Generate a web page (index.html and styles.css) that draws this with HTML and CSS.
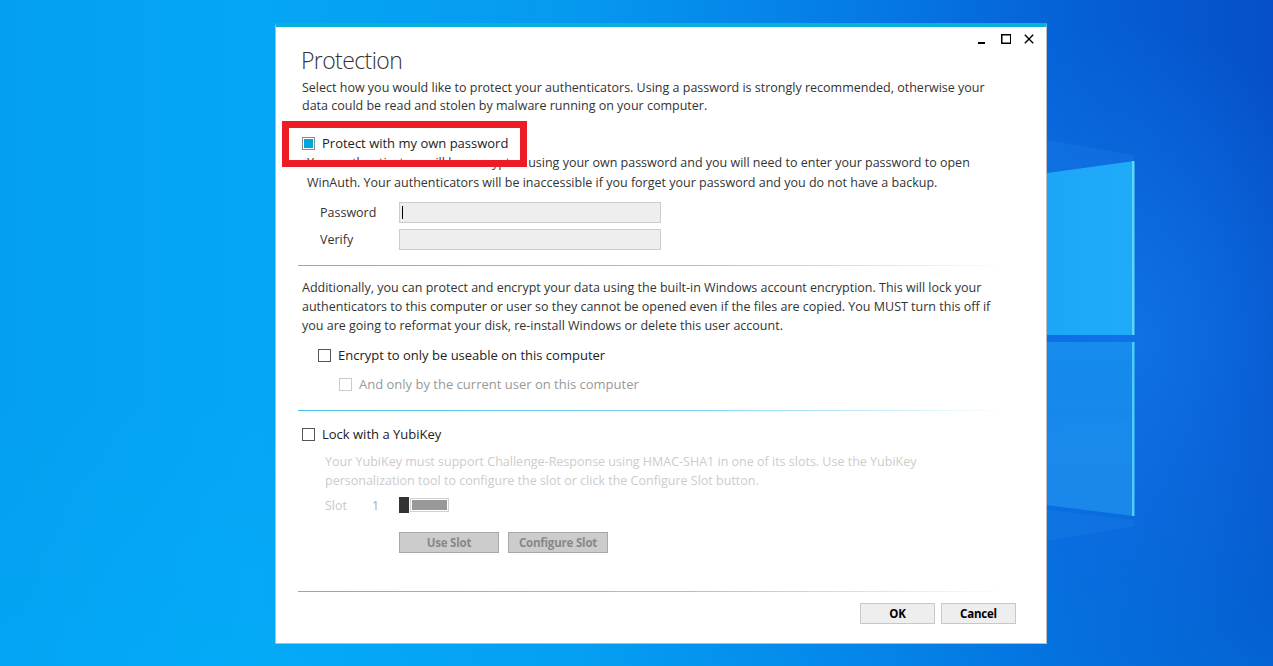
FILE: index.html
```html
<!DOCTYPE html>
<html lang="en">
<head>
<meta charset="utf-8">
<title>WinAuth - Protection</title>
<link rel="stylesheet" href="styles.css">
</head>
<body>
<div class="desktop">
  <svg class="wallpaper" width="1273" height="666" viewBox="0 0 1273 666" aria-hidden="true">
    <defs>
      <linearGradient id="paneTop" x1="0" y1="0" x2="1" y2="0">
        <stop offset="0" stop-color="#1798ef"/>
        <stop offset="1" stop-color="#20abf9"/>
      </linearGradient>
      <linearGradient id="paneBot" x1="0" y1="0" x2="0" y2="1">
        <stop offset="0" stop-color="#158cee"/>
        <stop offset="1" stop-color="#1983e9"/>
      </linearGradient>
    </defs>
    <polygon points="700,80 1134,155 1134,161 700,220" fill="#2a8ff0" opacity="0.18"/>
    <polygon points="700,470 1134,520 1134,526 700,600" fill="#2a8ff0" opacity="0.18"/>
    <polygon points="800,207 1134,161 1134,335 800,335" fill="url(#paneTop)"/>
    <polygon points="800,342 1134,342 1134,516 800,474" fill="url(#paneBot)"/>
    <polygon points="800,440 1134,420 1134,516 800,474" fill="#1b8cec" opacity="0.5"/>
    <rect x="1132" y="161" width="2.5" height="174" fill="#5cd8ff"/>
    <rect x="1132" y="342" width="2.5" height="174" fill="#50cdff"/>
  </svg>

  <div class="window">
    <div class="titlebar">
      <svg class="ctl" width="10" height="10" viewBox="0 0 10 10"><rect x="0" y="8" width="7" height="2" fill="#000"/></svg>
      <svg class="ctl" width="10" height="10" viewBox="0 0 10 10"><rect x="0.75" y="0.75" width="9" height="8.5" fill="none" stroke="#000" stroke-width="1.5"/></svg>
      <svg class="ctl" width="10" height="10" viewBox="0 0 10 10"><path d="M0.8 0.8 L9.2 9.2 M9.2 0.8 L0.8 9.2" stroke="#000" stroke-width="1.4"/></svg>
    </div>

    <div class="content">
      <h1 class="title">Protection</h1>
      <p class="text intro">Select how you would like to protect your authenticators. Using a password is strongly recommended, otherwise your<br>data could be read and stolen by malware running on your computer.</p>

      <div class="check-row own">
        <span class="box checked"><span class="fill"></span></span>
        <span class="label">Protect with my own password</span>
        <div class="highlight"></div>
      </div>
      <p class="text pw-note">Your authenticators will be encrypted using your own password and you will need to enter your password to open<br>WinAuth. Your authenticators will be inaccessible if you forget your password and you do not have a backup.</p>

      <div class="form">
        <div class="form-row">
          <span class="form-label">Password</span>
          <span class="input"><span class="caret"></span></span>
        </div>
        <div class="form-row">
          <span class="form-label">Verify</span>
          <span class="input"></span>
        </div>
      </div>

      <div class="rule r1"></div>

      <p class="text machine">Additionally, you can protect and encrypt your data using the built-in Windows account encryption. This will lock your<br>authenticators to this computer or user so they cannot be opened even if the files are copied. You MUST turn this off if<br>you are going to reformat your disk, re-install Windows or delete this user account.</p>

      <div class="check-row encrypt">
        <span class="box"></span>
        <span class="label">Encrypt to only be useable on this computer</span>
      </div>
      <div class="check-row user disabled">
        <span class="box"></span>
        <span class="label">And only by the current user on this computer</span>
      </div>

      <div class="rule r2"></div>

      <div class="check-row yubi">
        <span class="box"></span>
        <span class="label">Lock with a YubiKey</span>
      </div>
      <p class="text yubi-note">Your YubiKey must support Challenge-Response using HMAC-SHA1 in one of its slots. Use the YubiKey<br>personalization tool to configure the slot or click the Configure Slot button.</p>

      <div class="slot-row">
        <span class="slot-label">Slot</span>
        <span class="slot-num">1</span>
        <span class="slider"><span class="thumb"></span><span class="track"><span class="track-fill"></span></span></span>
      </div>

      <div class="slot-buttons">
        <span class="btn off">Use Slot</span>
        <span class="btn off">Configure Slot</span>
      </div>

      <div class="rule r3"></div>

      <div class="footer">
        <span class="btn">OK</span>
        <span class="btn">Cancel</span>
      </div>
    </div>
  </div>
</div>
</body>
</html>
```

FILE: styles.css
```css
* { box-sizing: border-box; }
html, body { margin: 0; padding: 0; }
body {
  width: 1273px;
  height: 666px;
  overflow: hidden;
  font-family: "Open Sans", "Noto Sans", "Liberation Sans", sans-serif;
}
.desktop {
  position: relative;
  width: 1273px;
  height: 666px;
  overflow: hidden;
  background:
    radial-gradient(ellipse 260px 320px at 1120px 340px, rgba(18,120,235,0.8) 0%, rgba(10,100,225,0) 100%),
    linear-gradient(to bottom, rgba(0,0,0,0) 60%, rgba(0,190,255,0.18) 100%),
    linear-gradient(to right, #049ff1 0%, #05a6f6 20%, #0699f0 45%, #0577e4 70%, #055fd6 85%, #0550c8 100%);
}
.wallpaper {
  position: absolute;
  left: 0;
  top: 0;
}
.window {
  position: absolute;
  left: 275px;
  top: 23px;
  width: 772px;
  height: 621px;
  background: #fff;
  border: 1px solid #bcbcbc;
  border-top: 4px solid #09b0da;
  color: #333;
}
.titlebar {
  height: 18px;
  display: flex;
  justify-content: flex-end;
  align-items: flex-start;
  gap: 13px;
  padding: 7px 12px 0 0;
}
.ctl { display: block; }
.content {
  padding: 0 30px 0 26px;
  display: flex;
  flex-direction: column;
}
.title {
  margin: 0 0 0 -1px;
  font-size: 23px;
  font-weight: 300;
  line-height: 30px;
  color: #333;
  letter-spacing: -0.6px;
}
.text {
  margin: 0;
  font-size: 12.5px;
  white-space: nowrap;
  letter-spacing: 0;
  color: #333;
}
.intro { margin-top: 4px; line-height: 18px; }
.check-row {
  position: relative;
  display: flex;
  align-items: center;
  height: 20px;
  font-size: 13px;
  letter-spacing: 0;
  color: #222;
  white-space: nowrap;
}
.check-row .label { margin-left: 7px; }
.box {
  width: 13px;
  height: 13px;
  border: 1px solid #555;
  background: #fff;
  flex: none;
  padding: 1px;
}
.box.checked { border-color: #8a8a8a; }
.box .fill { display: block; width: 100%; height: 100%; background: #00a7de; }
.own { margin-top: 18px; }
.highlight {
  position: absolute;
  left: -20px;
  top: -12px;
  width: 245px;
  height: 46px;
  border: 7px solid #ed1c24;
  pointer-events: none;
}
.pw-note { line-height: 20px; margin-left: 5px; }
.form {
  margin-top: 9px;
  display: flex;
  flex-direction: column;
  gap: 6px;
}
.form-row {
  display: flex;
  align-items: center;
  height: 21px;
  font-size: 12.5px;
  color: #333;
}
.form-label { width: 97px; padding-left: 18px; flex: none; }
.input {
  position: relative;
  width: 262px;
  height: 21px;
  background: #eeeeee;
  border: 1px solid #cccccc;
}
.caret {
  position: absolute;
  left: 2px;
  top: 3px;
  width: 1px;
  height: 13px;
  background: #000;
}
.rule {
  height: 1px;
  width: 712px;
  margin-left: -4px;
  background: linear-gradient(to right, #4cc1e7 0%, #7dd2ee 55%, rgba(180,230,248,0.6) 85%, rgba(255,255,255,0) 100%);
}
.r1 { margin-top: 15px; }
.machine { margin-top: 12px; line-height: 19px; }
.encrypt { margin-top: 10px; margin-left: 16px; }
.user { margin-top: 9px; margin-left: 37px; }
.disabled { color: #999; }
.disabled .box { border-color: #cccccc; }
.r2 { margin-top: 16px; }
.yubi { margin-top: 13px; }
.yubi-note { margin-top: 8px; line-height: 19px; margin-left: 23px; color: #cccccc; }
.slot-row {
  margin-top: 5px;
  height: 20px;
  display: flex;
  align-items: center;
  font-size: 12.5px;
  color: #c8c8c8;
}
.slot-label { margin-left: 23px; width: 47px; }
.slot-num { width: 27px; color: #aaaaaa; }
.slider { display: flex; align-items: center; height: 16px; }
.thumb { width: 10px; height: 16px; background: #333; }
.track {
  width: 39px;
  height: 14px;
  border: 1px solid #d0d0d0;
  padding: 1px;
  margin-left: 1px;
}
.track-fill { display: block; width: 100%; height: 100%; background: #999; }
.slot-buttons {
  margin-top: 17px;
  margin-left: 97px;
  display: flex;
  gap: 9px;
}
.btn {
  display: flex;
  align-items: center;
  justify-content: center;
  height: 21px;
  font-size: 11.5px;
  font-weight: 700;
  letter-spacing: -0.2px;
  background: #eeeeee;
  border: 1px solid #c8c8c8;
  color: #000;
}
.btn.off {
  width: 100px;
  background: #cccccc;
  border-color: #a8a8a8;
  color: #888;
}
.r3 { margin-top: 38px; }
.footer {
  margin-top: 11px;
  display: flex;
  justify-content: flex-end;
  gap: 6px;
}
.footer .btn { width: 75px; }
```
